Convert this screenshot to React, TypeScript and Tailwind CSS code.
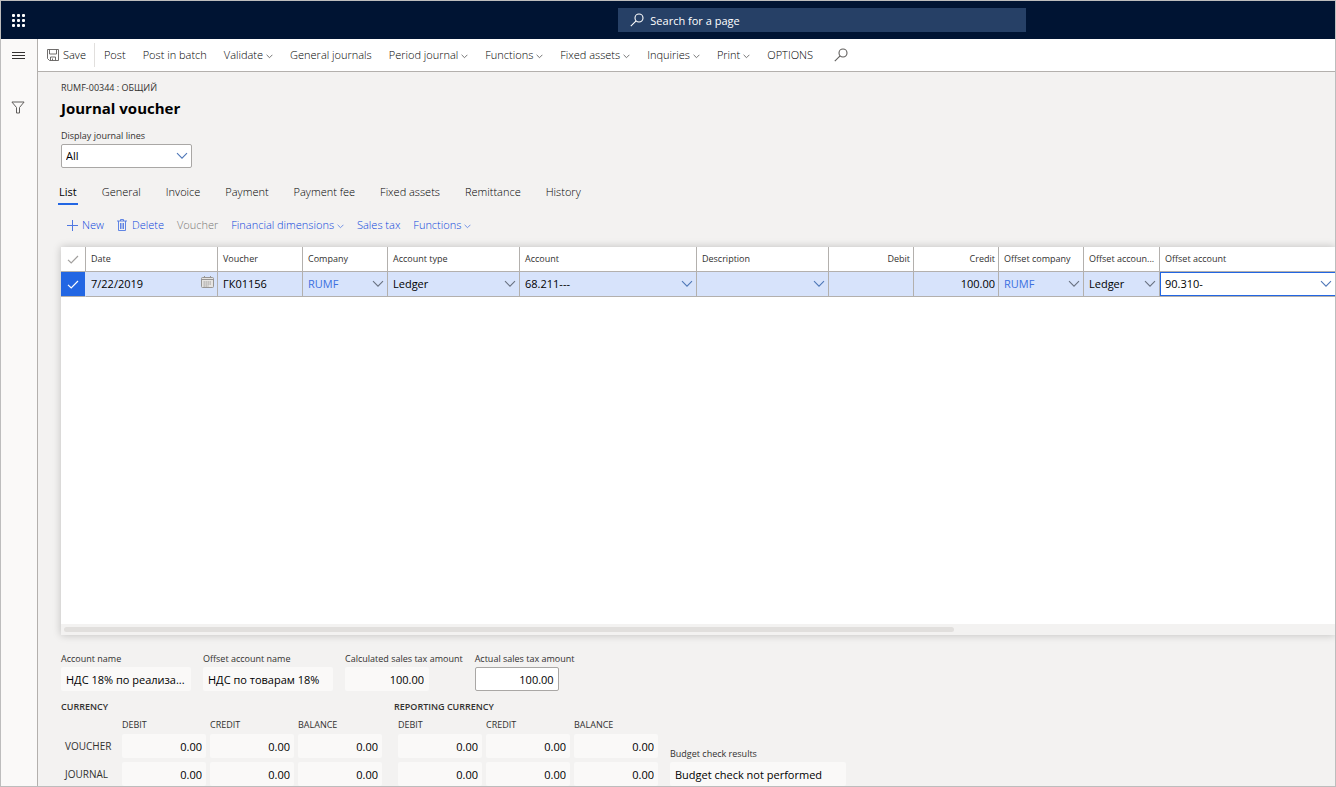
import React, { useState } from "react";

type IconProps = { className?: string };

function Chevron({ className = "" }: IconProps) {
  return (
    <svg viewBox="0 0 12 8" fill="none" stroke="currentColor" className={className} aria-hidden="true">
      <path d="M1 1.2 6 6.2 11 1.2" strokeWidth="1.1" />
    </svg>
  );
}

function SmallChevron() {
  return (
    <svg viewBox="0 0 7 5" width="7" height="5" fill="none" stroke="currentColor" className="mt-0.5 shrink-0 opacity-60" aria-hidden="true">
      <path d="M.6 .8 3.5 3.7 6.4 .8" strokeWidth=".9" />
    </svg>
  );
}

function SearchIcon({ className = "" }: IconProps) {
  return (
    <svg viewBox="0 0 14 14" width="14" height="14" fill="none" stroke="currentColor" className={className} aria-hidden="true">
      <circle cx="9" cy="5" r="4" strokeWidth="1.1" />
      <path d="M6.1 7.9 .8 13.2" strokeWidth="1.1" />
    </svg>
  );
}

function CheckIcon({ className = "" }: IconProps) {
  return (
    <svg viewBox="0 0 12 9" width="12" height="9" fill="none" stroke="currentColor" className={className} aria-hidden="true">
      <path d="M1 4.8 4.2 8 11 1" strokeWidth="1.2" />
    </svg>
  );
}

function CalendarIcon() {
  return (
    <svg viewBox="0 0 13 12" width="13" height="12" fill="none" stroke="#979593" aria-hidden="true">
      <rect x=".5" y="1.5" width="12" height="10" rx="1" fill="#e6e4e2" />
      <path d="M1 3.5h11M3.5 0v2M9.5 0v2" />
      <path d="M2.5 6h8M2.5 8h8M2.5 10h5" strokeDasharray="1.4 .6" />
    </svg>
  );
}

const commands: { label: string; menu?: boolean }[] = [
  { label: "Post" },
  { label: "Post in batch" },
  { label: "Validate", menu: true },
  { label: "General journals" },
  { label: "Period journal", menu: true },
  { label: "Functions", menu: true },
  { label: "Fixed assets", menu: true },
  { label: "Inquiries", menu: true },
  { label: "Print", menu: true },
  { label: "OPTIONS" },
];

const tabs = ["List", "General", "Invoice", "Payment", "Payment fee", "Fixed assets", "Remittance", "History"];

type Column = {
  label: string;
  width: string;
  value: string;
  right?: boolean;
  link?: boolean;
  lookup?: string;
  date?: boolean;
};

const columns: Column[] = [
  { label: "Date", width: "w-[132px]", value: "7/22/2019", date: true },
  { label: "Voucher", width: "w-[85px]", value: "ГК01156" },
  { label: "Company", width: "w-[85px]", value: "RUMF", link: true, lookup: "text-gray-500" },
  { label: "Account type", width: "w-[132px]", value: "Ledger", lookup: "text-gray-500" },
  { label: "Account", width: "w-[177px]", value: "68.211---", lookup: "text-[#4f78b8]" },
  { label: "Description", width: "w-[132px]", value: "", lookup: "text-[#4f78b8]" },
  { label: "Debit", width: "w-[85px]", value: "", right: true },
  { label: "Credit", width: "w-[85px]", value: "100.00", right: true },
  { label: "Offset company", width: "w-[85px]", value: "RUMF", link: true, lookup: "text-gray-500" },
  { label: "Offset accoun...", width: "w-[76px]", value: "Ledger", lookup: "text-gray-500" },
];

function Field({ id, label, value, width, right, editable }: {
  id: string; label: string; value: string; width: string; right?: boolean; editable?: boolean;
}) {
  return (
    <div className="flex flex-col items-start">
      <label htmlFor={id} className="h-4 text-[9px] leading-4 whitespace-nowrap">{label}</label>
      <input
        id={id}
        defaultValue={value}
        readOnly={!editable}
        className={`h-6 rounded-[2px] border px-1 text-[11px] text-black ${width} ${right ? "text-right" : ""} ${editable ? "border-[#a9a7a5] bg-white" : "border-transparent bg-[#faf9f8]"}`}
      />
    </div>
  );
}

function Totals({ title, rows }: { title: string; rows?: boolean }) {
  return (
    <table className="border-separate border-spacing-0">
      <caption className="h-4 text-left text-[9px] leading-4 font-semibold whitespace-nowrap">{title}</caption>
      <thead>
        <tr className="h-[19px] text-left text-[9px]">
          <td className={rows ? "w-[61px] p-0" : "w-1 p-0"} />
          {["DEBIT", "CREDIT", "BALANCE"].map((h) => (
            <th key={h} scope="col" className="w-[88px] p-0 font-normal">{h}</th>
          ))}
        </tr>
      </thead>
      <tbody>
        {["VOUCHER", "JOURNAL"].map((r) => (
          <tr key={r} className="align-top">
            {rows ? <th scope="row" className="p-0 pl-1 text-left text-[10px] leading-6 font-normal">{r}</th> : <td className="p-0" />}
            {["debit", "credit", "balance"].map((c) => (
              <td key={c} className={r === "VOUCHER" ? "p-0 pr-1 pb-1" : "p-0 pr-1"}>
                <input
                  aria-label={`${title} ${r} ${c}`}
                  readOnly
                  value="0.00"
                  className="block h-6 w-[84px] rounded-[2px] bg-[#faf9f8] px-1 text-right text-[11px] text-black"
                />
              </td>
            ))}
          </tr>
        ))}
      </tbody>
    </table>
  );
}

export default function App() {
  const [tab, setTab] = useState("List");
  return (
    <div className="flex h-screen flex-col overflow-hidden border border-[#bdbdbd] bg-[#f3f2f1] font-['Open_Sans','Noto_Sans',sans-serif] text-[11px] text-[#323130]">
      <header className="grid h-[38px] shrink-0 grid-cols-[2fr_408px_1fr] items-center bg-[#001433]">
        <button aria-label="Apps" className="ml-[9px] flex size-4 items-center justify-center">
          <svg viewBox="0 0 13 13" width="13" height="13" fill="#fff" aria-hidden="true">
            {[0, 5, 10].map((y) => [0, 5, 10].map((x) => <rect key={`${x}-${y}`} x={x} y={y} width="3" height="3" rx="1" />))}
          </svg>
        </button>
        <label className="flex h-6 items-center gap-1.5 bg-[#264066] pl-3 text-white">
          <SearchIcon />
          <input aria-label="Search" placeholder="Search for a page" className="min-w-0 flex-1 bg-transparent pt-0.5 placeholder:text-white placeholder:opacity-100" />
        </label>
      </header>

      <div className="flex min-h-0 flex-1">
        <aside className="flex w-[37px] shrink-0 flex-col items-center border-r border-[#b3b0ad] bg-[#faf9f8] pr-0.5">
          <button aria-label="Navigation" className="flex h-8 items-center">
            <svg viewBox="0 0 13 9" width="13" height="9" stroke="#323130" aria-hidden="true">
              <path d="M0 1.5h13M0 4.5h13M0 7.5h13" strokeWidth="1" />
            </svg>
          </button>
          <button aria-label="Filter" className="mt-5 flex h-8 items-center">
            <svg viewBox="0 0 14 13" width="14" height="13" fill="none" stroke="#605e5c" aria-hidden="true">
              <path d="M.9 1h12.2L8.5 6.5V12h-3V6.5Z" />
            </svg>
          </button>
        </aside>

        <main className="flex min-w-0 flex-1 flex-col">
          <div className="flex h-[33px] shrink-0 items-center gap-[17px] border-b border-[#b3b0ad] bg-white pl-[9px] font-light whitespace-nowrap text-black">
            <div className="-mr-2 flex h-6 items-center border-r border-[#e1dfdd] pr-2">
              <button className="flex items-center gap-1">
                <svg viewBox="0 0 12 12" width="12" height="12" fill="none" stroke="#605e5c" aria-hidden="true">
                  <path d="M.5 .5h11v11h-9l-2-2ZM2.5 .5v4.5h7v-4.5M3.5 11.5v-3.5h5v3.5M5.5 9.5v2" strokeWidth=".9" />
                </svg>
                Save
              </button>
            </div>
            {commands.map((c) => (
              <button key={c.label} className="flex items-center gap-[3px]">
                {c.label}
                {c.menu && <SmallChevron />}
              </button>
            ))}
            <button aria-label="Search actions"><SearchIcon className="ml-1 text-[#605e5c]" /></button>
          </div>

          <div className="flex min-h-0 flex-1 flex-col pl-[23px]">
            <p className="mt-2 h-4 text-[9px] leading-4 whitespace-nowrap">RUMF-00344 : ОБЩИЙ</p>
            <h1 className="h-6 text-[15px] leading-6 font-bold text-black">Journal voucher</h1>
            <label htmlFor="lines" className="mt-2 h-4 text-[9px] leading-4">Display journal lines</label>
            <div className="relative h-6 w-[131px] shrink-0">
              <select id="lines" defaultValue="All" className="block size-full appearance-none rounded-[2px] border border-[#a9a7a5] bg-white px-1 text-black">
                <option>All</option>
                <option>Posted</option>
              </select>
              <Chevron className="pointer-events-none absolute top-2 right-1 h-2 w-3 text-[#4f78b8]" />
            </div>

            <div role="tablist" className="-ml-[3px] mt-4 flex h-[21px] shrink-0 gap-[23px] whitespace-nowrap">
              {tabs.map((t) => (
                <button
                  key={t}
                  role="tab"
                  aria-selected={t === tab}
                  onClick={() => setTab(t)}
                  className={`border-b-2 px-px pb-[5px] leading-4 text-black ${t === tab ? "border-[#2266e3]" : "border-transparent font-light"}`}
                >
                  {t}
                </button>
              ))}
            </div>

            <div className="mt-3 flex h-4 shrink-0 items-center gap-[13px] pl-1.5 font-light whitespace-nowrap text-[#0b45dc]">
              <button className="flex items-center gap-1">
                <svg viewBox="0 0 11 11" width="11" height="11" stroke="currentColor" className="opacity-70" aria-hidden="true"><path d="M5.5 0v11M0 5.5h11" /></svg>
                New
              </button>
              <button className="flex items-center gap-[5px]">
                <svg viewBox="0 0 10 12" width="10" height="12" fill="none" stroke="currentColor" className="opacity-70" aria-hidden="true">
                  <path d="M0 2h10M3.5 2V.5h3V2M1.5 2v9.5h7V2M3.5 4v6M5 4v6M6.5 4v6" strokeWidth=".9" />
                </svg>
                Delete
              </button>
              <button disabled className="text-[#797775]">Voucher</button>
              <button className="flex items-center gap-[3px]">Financial dimensions<SmallChevron /></button>
              <button>Sales tax</button>
              <button className="flex items-center gap-[3px]">Functions<SmallChevron /></button>
            </div>

            <section className="mt-[14px] flex min-h-[120px] flex-1 flex-col bg-white shadow-[0_0_8px_rgba(0,0,0,0.22)]">
              <table className="w-full table-fixed border-separate border-spacing-0">
                <thead>
                  <tr className="h-[25px] text-[9px]">
                    <th className="w-[25px] border-r border-b border-[#b3b0ad] p-0">
                      <CheckIcon className="mx-auto text-[#a19f9d]" />
                    </th>
                    {columns.map((c) => (
                      <th key={c.label} scope="col" className={`border-r border-b border-[#b3b0ad] p-0 pr-[3px] pl-[5px] font-normal whitespace-nowrap ${c.width} ${c.right ? "text-right" : "text-left"}`}>
                        {c.label}
                      </th>
                    ))}
                    <th scope="col" className="border-b border-[#b3b0ad] p-0 pl-[5px] text-left font-normal">Offset account</th>
                  </tr>
                </thead>
                <tbody>
                  <tr className="h-[25px] bg-[#d7e3fb] text-black">
                    <td className="border-r border-b border-[#b3b0ad] border-r-[#d7e3fb] bg-[#2266e3] p-0">
                      <label className="flex items-center justify-center text-white">
                        <input type="checkbox" defaultChecked aria-label="Select row" className="sr-only" />
                        <CheckIcon />
                      </label>
                    </td>
                    {columns.map((c) => (
                      <td key={c.label} className="border-r border-b border-[#b3b0ad] p-0">
                        <div className="flex h-6 items-center pr-[3px] pl-[5px]">
                          <input aria-label={c.label} defaultValue={c.value} className={`h-5 min-w-0 flex-1 bg-transparent pb-0.5 ${c.right ? "text-right" : ""} ${c.link ? "text-[#3b6fe0]" : ""}`} />
                          {c.lookup && <button aria-label={`Open ${c.label}`}><Chevron className={`h-2 w-3 ${c.lookup}`} /></button>}
                          {c.date && <button aria-label="Pick a date" className="pb-1"><CalendarIcon /></button>}
                        </div>
                      </td>
                    ))}
                    <td className="border-b border-[#b3b0ad] p-0">
                      <div className="flex h-6 items-center border-y border-l border-[#2266e3] bg-white pr-[3px] pl-1">
                        <input aria-label="Offset account" defaultValue="90.310-" className="h-5 min-w-0 flex-1 bg-transparent pb-0.5" />
                        <button aria-label="Open Offset account"><Chevron className="h-2 w-3 text-[#4f78b8]" /></button>
                      </div>
                    </td>
                  </tr>
                </tbody>
              </table>
              <div className="mt-auto bg-[#f3f2f1] py-[3px] pl-[3px]">
                <div className="h-[5px] w-[70%] rounded-full bg-[#e1dfdd]" />
              </div>
            </section>

            <div className="mt-4 flex shrink-0 gap-3">
              <Field id="acc" label="Account name" value="НДС 18% по реализа..." width="w-[130px]" />
              <Field id="off" label="Offset account name" value="НДС по товарам 18%" width="w-[130px]" />
              <Field id="calc" label="Calculated sales tax amount" value="100.00" width="w-[84px]" right />
              <Field id="act" label="Actual sales tax amount" value="100.00" width="w-[84px]" right editable />
            </div>

            <div className="mt-2 flex shrink-0 items-end">
              <Totals title="CURRENCY" rows />
              <div className="ml-2">
                <Totals title="REPORTING CURRENCY" />
              </div>
              <div className="ml-2">
                <Field id="budget" label="Budget check results" value="Budget check not performed" width="w-[176px]" />
              </div>
            </div>
          </div>
        </main>
      </div>
    </div>
  );
}
